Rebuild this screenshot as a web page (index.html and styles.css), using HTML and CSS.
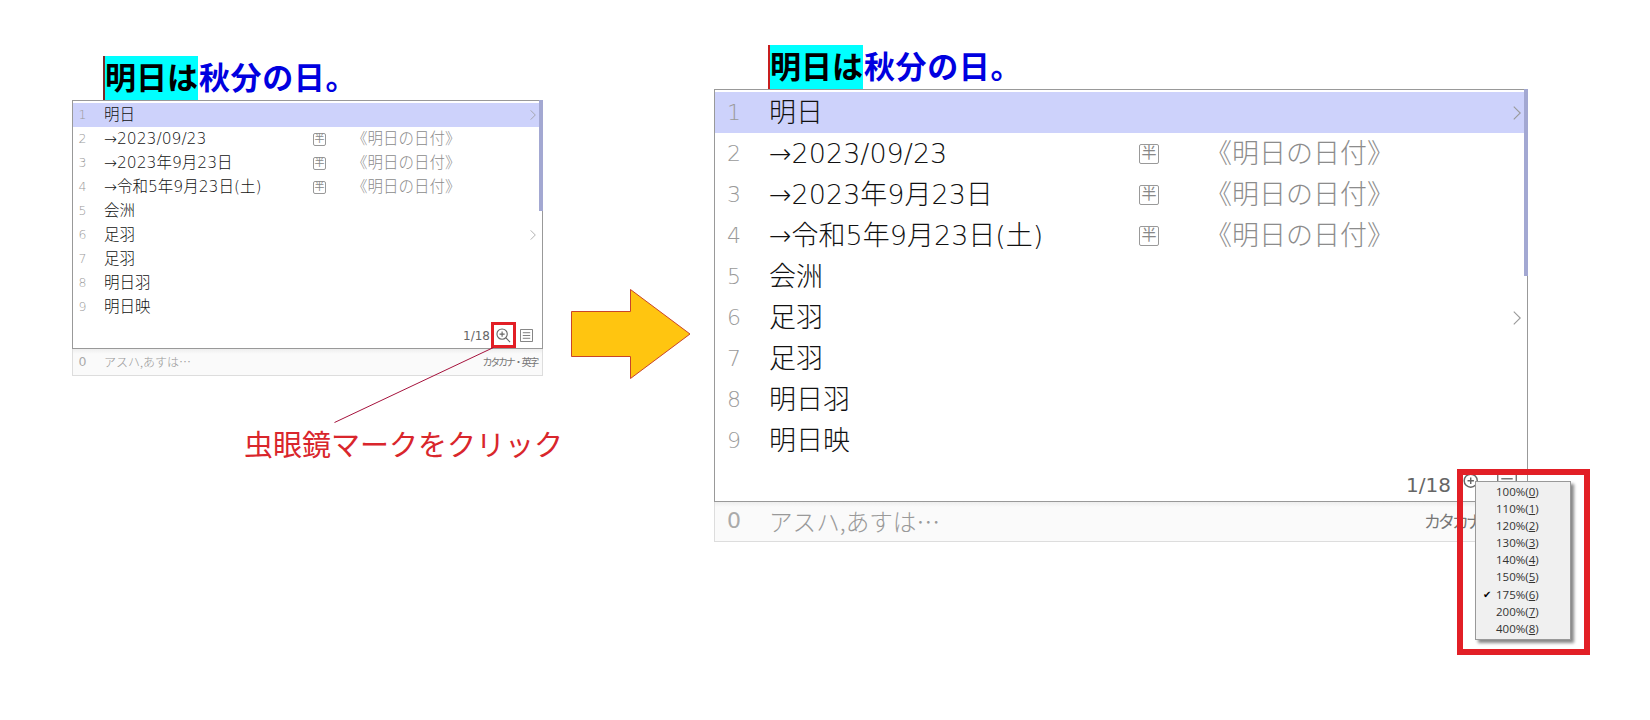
FILE: index.html
```html
<!DOCTYPE html>
<html lang="ja">
<head>
<meta charset="utf-8">
<title>IME候補ウィンドウの拡大</title>
<link rel="stylesheet" href="styles.css">
</head>
<body>
<main class="canvas">
  <section class="ime ime-small">
    <div class="compose"><span class="caret"></span><span class="conv">明日は</span><span class="rest">秋分の日。</span></div>
    <div class="list">
      <div class="scrollbar"></div>
      <div class="row selected"><span class="num">1</span><span class="word">明日</span><span class="mark"></span><span class="note"></span><svg class="chev" viewBox="0 0 7 13"><path d="M.5.5 6.5 6.5.5 12.5"/></svg></div>
      <div class="row"><span class="num">2</span><span class="word">→2023/09/23</span><span class="mark"><span class="half">半</span></span><span class="note">《明日の日付》</span></div>
      <div class="row"><span class="num">3</span><span class="word">→2023年9月23日</span><span class="mark"><span class="half">半</span></span><span class="note">《明日の日付》</span></div>
      <div class="row"><span class="num">4</span><span class="word">→令和5年9月23日(土)</span><span class="mark"><span class="half">半</span></span><span class="note">《明日の日付》</span></div>
      <div class="row"><span class="num">5</span><span class="word">会洲</span></div>
      <div class="row"><span class="num">6</span><span class="word">足羽</span><span class="mark"></span><span class="note"></span><svg class="chev" viewBox="0 0 7 13"><path d="M.5.5 6.5 6.5.5 12.5"/></svg></div>
      <div class="row"><span class="num">7</span><span class="word">足羽</span></div>
      <div class="row"><span class="num">8</span><span class="word">明日羽</span></div>
      <div class="row"><span class="num">9</span><span class="word">明日映</span></div>
      <div class="status">
        <span class="count">1/18</span>
        <svg class="zoom-icon" viewBox="0 0 16 16"><circle cx="6.5" cy="6.5" r="5.5"/><path d="M6.5 3.8v5.4M3.8 6.5h5.4M10.6 10.6 15 15"/></svg>
        <svg class="menu-icon" viewBox="0 0 14 14"><path d="M.5.5h13v13H.5zM3 4h8M3 7h8M3 10h8"/></svg>
      </div>
    </div>
    <div class="foot"><span class="num">0</span><span class="reading">アスハ,あすは…</span><span class="kind">カタカナ・英字</span></div>
  </section>

  <div class="redbox redbox-small"></div>
  <svg class="leader" viewBox="0 0 160 76"><path d="M159.500 .5 .5 75.500"/></svg>
  <p class="callout">虫眼鏡マークをクリック</p>
  <svg class="arrow" viewBox="0 0 120 90"><path d="M.5 22.500H59.500V.5L119 45 59.500 89.500V67.500H.5Z"/></svg>

  <section class="ime ime-large">
    <div class="compose"><span class="caret"></span><span class="conv">明日は</span><span class="rest">秋分の日。</span></div>
    <div class="list">
      <div class="scrollbar"></div>
      <div class="row selected"><span class="num">1</span><span class="word">明日</span><span class="mark"></span><span class="note"></span><svg class="chev" viewBox="0 0 7 13"><path d="M.5.5 6.5 6.5.5 12.5"/></svg></div>
      <div class="row"><span class="num">2</span><span class="word">→2023/09/23</span><span class="mark"><span class="half">半</span></span><span class="note">《明日の日付》</span></div>
      <div class="row"><span class="num">3</span><span class="word">→2023年9月23日</span><span class="mark"><span class="half">半</span></span><span class="note">《明日の日付》</span></div>
      <div class="row"><span class="num">4</span><span class="word">→令和5年9月23日(土)</span><span class="mark"><span class="half">半</span></span><span class="note">《明日の日付》</span></div>
      <div class="row"><span class="num">5</span><span class="word">会洲</span></div>
      <div class="row"><span class="num">6</span><span class="word">足羽</span><span class="mark"></span><span class="note"></span><svg class="chev" viewBox="0 0 7 13"><path d="M.5.5 6.5 6.5.5 12.5"/></svg></div>
      <div class="row"><span class="num">7</span><span class="word">足羽</span></div>
      <div class="row"><span class="num">8</span><span class="word">明日羽</span></div>
      <div class="row"><span class="num">9</span><span class="word">明日映</span></div>
      <div class="status">
        <span class="count">1/18</span>
        <svg class="zoom-icon" viewBox="0 0 16 16"><circle cx="6.5" cy="6.5" r="5.5"/><path d="M6.5 3.800v5.400M3.800 6.500h5.400M10.600 10.600 15 15"/></svg>
        <svg class="menu-icon" viewBox="0 0 14 14"><path d="M.5.5h13v13H.5zM3 4h8M3 7h8M3 10h8"/></svg>
      </div>
    </div>
    <div class="foot"><span class="num">0</span><span class="reading">アスハ,あすは…</span><span class="kind">カタカナ・英字</span></div>
  </section>

  <div class="redbox redbox-large"></div>
  <ul class="popup">
    <li>100%(<u>0</u>)</li>
    <li>110%(<u>1</u>)</li>
    <li>120%(<u>2</u>)</li>
    <li>130%(<u>3</u>)</li>
    <li>140%(<u>4</u>)</li>
    <li>150%(<u>5</u>)</li>
    <li class="checked">175%(<u>6</u>)</li>
    <li>200%(<u>7</u>)</li>
    <li>400%(<u>8</u>)</li>
  </ul>
</main>
</body>
</html>
```
FILE: styles.css
```css
* { box-sizing: border-box; }

html, body {
  margin: 0;
  height: 100%;
  background: #fff;
}

body {
  font-family: "DejaVu Sans", "Noto Sans CJK JP", sans-serif;
  overflow: hidden;
}

.canvas {
  position: relative;
  width: 1650px;
  height: 720px;
}

/* Each IME window sits on the free canvas of the annotated picture */
.ime { position: absolute; display: flex; flex-direction: column; }

.ime-small {
  left: 72px; top: 56px; width: 471px;
  --title-x: 31px;
  --indent: 31px;
  --num-w: 19px;
  --row: 24px;
  --row-shift: -.5px;
  --fs: 15.500px;
  --num-fs: 12.500px;
  --word-col: 209px;
  --mark-col: 13px;
  --gap-col: 26px;
  --half-fs: 10px;
  --half-size: 13px;
  --list-h: 249px;
  --status-h: 29px;
  --count-fs: 12px;
  --count-y: 1px;
  --zoom: 15px;
  --menu: 13px;
  --status-gap1: 6px;
  --status-gap2: 9px;
  --status-pr: 9px;
  --bar-h: 111px;
  --foot-h: 27px;
  --read-fs: 12px;
  --kind-fs: 10px;
  --kind-ls: -2.200px;
  --chev-w: 6px;
  --chev-h: 10px;
  --caret: #7c2a2a;
}

.ime-large {
  left: 714px; top: 45px; width: 814px;
  --title-x: 54px;
  --indent: 54px;
  --num-w: 38px;
  --row: 41px;
  --row-shift: -1px;
  --fs: 27px;
  --num-fs: 22px;
  --word-col: 370px;
  --mark-col: 20px;
  --gap-col: 46px;
  --half-fs: 15px;
  --half-size: 20px;
  --list-h: 413px;
  --status-h: 40px;
  --count-fs: 20px;
  --count-y: 5px;
  --zoom: 19px;
  --menu: 20px;
  --status-gap1: 12px;
  --status-gap2: 15px;
  --status-pr: 10px;
  --bar-h: 187px;
  --foot-h: 40px;
  --read-fs: 23.600px;
  --kind-fs: 17px;
  --kind-ls: -3px;
  --chev-w: 8px;
  --chev-h: 14px;
  --caret: #c81e1e;
}

.compose {
  display: flex;
  height: 44px;
  margin-left: var(--title-x);
  font-family: "Noto Sans CJK JP", sans-serif;
  font-size: 31px;
  font-weight: 700;
  line-height: 40px;
}

.caret { width: 2px; background: var(--caret); }
.conv { background: #00ffff; color: #000; }
.rest { color: #0000e0; margin-left: 1px; letter-spacing: .6px; }

.list {
  position: relative;
  height: var(--list-h);
  padding-top: 2px;
  border: 1px solid #999;
  display: flex;
  flex-direction: column;
  background: #fff;
}

.scrollbar {
  position: absolute;
  top: -1px; right: -1px;
  width: 4px;
  height: var(--bar-h);
  background: #a3a8d2;
  z-index: 1;
}

.row {
  display: grid;
  grid-template-columns: var(--indent) var(--word-col) var(--mark-col) var(--gap-col) 1fr auto;
  align-items: center;
  flex: none;
  height: var(--row);
  padding-right: 6px;
  font-size: var(--fs);
  font-weight: 300;
  line-height: calc(var(--row) - var(--row-shift));
  color: #111;
  white-space: nowrap;
}

.row > span { height: var(--row); }
.row > .mark { height: auto; }

.row.selected { background: #cdd2fb; }

.num {
  font-size: var(--num-fs);
  width: var(--num-w);
  text-align: center;
  color: #9a9a9a;
}

.word { grid-column: 2; }

.mark { grid-column: 3; display: flex; }

.half {
  display: flex;
  align-items: center;
  justify-content: center;
  width: var(--half-size);
  height: var(--half-size);
  border: 1px solid #999;
  border-radius: 2px;
  font-size: var(--half-fs);
  font-weight: 400;
  line-height: 1;
  color: #888;
}

.note {
  grid-column: 5;
  color: #8c8c8c;
}

.chev {
  grid-column: 6;
  width: var(--chev-w);
  height: var(--chev-h);
  fill: none;
  stroke: #999;
  stroke-width: 1;
}

.status {
  display: flex;
  align-items: center;
  justify-content: flex-end;
  height: var(--status-h);
  padding: 3px var(--status-pr) 0 0;
}

.count { font-size: var(--count-fs); color: #666; margin-top: var(--count-y); }

.zoom-icon {
  width: var(--zoom);
  height: var(--zoom);
  margin: 0 var(--status-gap2) 0 var(--status-gap1);
  fill: none;
  stroke: #666;
  stroke-width: 1.200;
}

.menu-icon {
  width: var(--menu);
  height: var(--menu);
  fill: none;
  stroke: #777;
  stroke-width: 1;
}

.foot {
  display: grid;
  grid-template-columns: var(--indent) 1fr auto;
  align-items: center;
  height: var(--foot-h);
  padding: 0 5px 2px 0;
  border: 1px solid #ddd;
  border-top: 0;
  background: linear-gradient(#eeeeee, #fafafa 5px);
}

.foot .num { color: #aaa; }

.reading {
  font-family: "Noto Sans CJK JP", sans-serif;
  font-size: var(--read-fs);
  font-weight: 300;
  color: #999;
}

.kind {
  font-family: "Noto Sans CJK JP", sans-serif;
  font-size: var(--kind-fs);
  letter-spacing: var(--kind-ls);
  color: #777;
}

/* Annotations lying over the picture */
.redbox { position: absolute; border-style: solid; border-color: #e21f26; }
.redbox-small { left: 491px; top: 322px; width: 25px; height: 26px; border-width: 3px; z-index: 2; }
.redbox-large { left: 1457px; top: 469px; width: 133px; height: 186px; border-width: 6px; z-index: 2; }

.leader {
  position: absolute;
  left: 334px; top: 347px;
  width: 160px; height: 76px;
  fill: none;
  stroke: #a5123c;
  stroke-width: 1;
  z-index: 2;
}

.callout {
  position: absolute;
  left: 244px; top: 423px;
  margin: 0;
  font-family: "Noto Sans CJK JP", sans-serif;
  font-size: 29px;
  font-weight: 400;
  line-height: 40px;
  color: #d9262c;
  white-space: nowrap;
}

.arrow {
  position: absolute;
  left: 571px; top: 289px;
  width: 120px; height: 90px;
  fill: #ffc510;
  stroke: #c8452a;
  stroke-width: 1;
}

.popup {
  position: absolute;
  left: 1475px; top: 481px;
  z-index: 3;
  width: 96px;
  height: 159px;
  margin: 0;
  padding: 1px 0 0 20px;
  list-style: none;
  background: #f0f0f0;
  border: 1px solid #999;
  box-shadow: 3px 3px 3px #888;
  font-family: "Open Sans", "Liberation Sans", sans-serif;
  font-size: 11.500px;
  color: #333;
}

.popup li {
  position: relative;
  height: 17.100px;
  line-height: 17px;
}

.popup .checked::before {
  content: "✔";
  position: absolute;
  left: -13px;
  font-size: 10px;
  color: #000;
}
```
